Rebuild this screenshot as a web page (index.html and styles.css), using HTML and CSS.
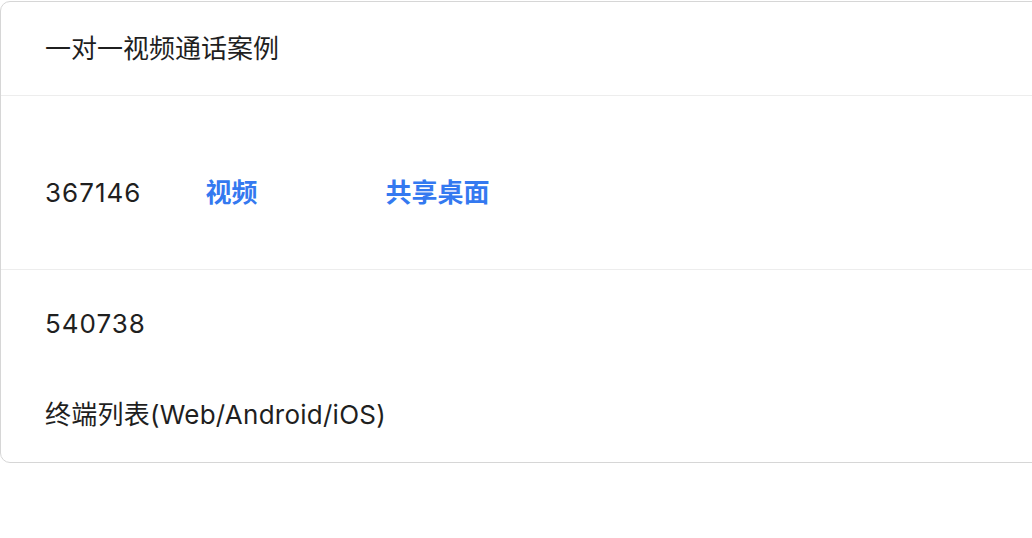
FILE: index.html
```html
<!DOCTYPE html>
<html lang="zh">
<head>
<meta charset="utf-8">
<title>一对一视频通话案例</title>
<link rel="stylesheet" href="styles.css">
</head>
<body>
<div class="card">
  <div class="card-head">一对一视频通话案例</div>
  <div class="section section-call">
    <div class="call-row">
      <span class="peer-id">367146</span>
      <button class="link-btn" type="button">视频</button>
      <button class="link-btn" type="button">共享桌面</button>
    </div>
  </div>
  <div class="section section-self">
    <div class="self-id">540738</div>
    <div class="list-title">终端列表(Web/Android/iOS)</div>
  </div>
</div>
</body>
</html>
```
FILE: styles.css
```css
html, body {
  margin: 0;
  padding: 0;
  background: #ffffff;
  overflow: hidden;
}

body {
  font-family: Inter, "Noto Sans CJK SC", sans-serif;
  font-size: 26px;
  color: #1f1f1f;
}

.card {
  box-sizing: border-box;
  width: 1100px;
  margin-top: 1px;
  border: 1px solid #d6d6d6;
  border-radius: 10px;
  background: #ffffff;
}

.card-head {
  height: 93px;
  display: flex;
  align-items: center;
  padding-left: 44px;
  border-bottom: 1px solid #ededed;
  line-height: 36px;
}

.section {
  padding-left: 44px;
  line-height: 36px;
}

.section-call {
  padding-top: 79px;
  padding-bottom: 58px;
  border-bottom: 1px solid #ededed;
}

.call-row {
  display: flex;
  align-items: center;
}

.peer-id,
.self-id {
  letter-spacing: 1px;
}

.list-title {
  letter-spacing: 0.25px;
}

.link-btn {
  font: inherit;
  font-weight: 600;
  color: #3479f0;
  background: none;
  border: 0;
  padding: 0 64px;
  line-height: 36px;
  cursor: pointer;
}

.section-self {
  padding-top: 36px;
  padding-bottom: 29px;
  display: flex;
  flex-direction: column;
  gap: 55px;
}
```
